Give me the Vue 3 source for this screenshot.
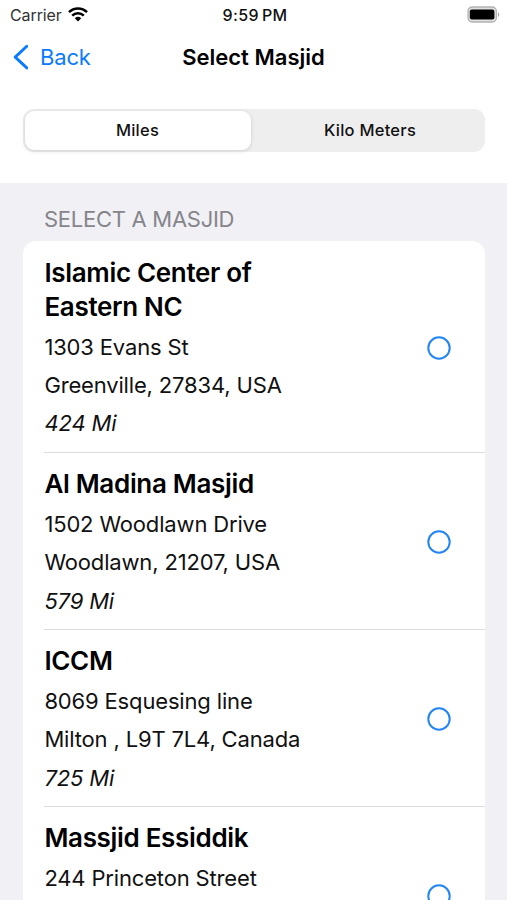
<script setup>
const masjids = [
  { name: ['Islamic Center of', 'Eastern NC'], street: '1303 Evans St', city: 'Greenville, 27834, USA', distance: '424 Mi' },
  { name: ['Al Madina Masjid'], street: '1502 Woodlawn Drive', city: 'Woodlawn, 21207, USA', distance: '579 Mi' },
  { name: ['ICCM'], street: '8069 Esquesing line', city: 'Milton , L9T 7L4, Canada', distance: '725 Mi' },
  { name: ['Massjid Essiddik'], street: '244 Princeton Street' }
]
</script>

<template>
  <div class="screen">
    <header class="top">
      <div class="status">
        <div class="carrier"><span>Carrier</span>
          <svg width="20" height="15" viewBox="0 0 20 15"><g fill="none" stroke="#000" stroke-width="2.5"><path d="M1 5.2a12.8 12.8 0 0 1 18 0"/><path d="M4.2 8.6a8.3 8.3 0 0 1 11.6 0"/></g><path d="M6.8 11.3a4.7 4.7 0 0 1 6.4 0L10 14.5z"/></svg>
        </div>
        <div class="time">9:59<span>PM</span></div>
        <svg class="battery" width="33" height="17" viewBox="0 0 33 17"><rect x="1" y="1" width="28.4" height="15" rx="4.2" fill="#e0e0e0" stroke="#b2b2b2" stroke-width="1.3"/><rect x="2.8" y="3.4" width="24.6" height="10.2" rx="2"/><path d="M31 6.2c1.7.6 1.7 4 0 4.6z" fill="#aaa"/></svg>
      </div>
      <nav class="nav">
        <div class="back"><svg width="16" height="26" viewBox="0 0 16 26"><path d="M14.8 2.3 3.2 13.1l11.6 10.8" fill="none" stroke="#0a7aff" stroke-width="2.9" stroke-linecap="round" stroke-linejoin="round"/></svg><span>Back</span></div>
        <h1>Select Masjid</h1>
        <div></div>
      </nav>
      <div class="segments"><div class="segment selected">Miles</div><div class="segment">Kilo Meters</div></div>
    </header>
    <main>
      <h2>SELECT A MASJID</h2>
      <div class="list">
        <article v-for="m in masjids" :key="m.street" class="row">
          <div class="info">
            <h3><span v-for="line in m.name" :key="line">{{ line }}</span></h3>
            <p>{{ m.street }}</p>
            <p v-if="m.city">{{ m.city }}</p>
            <p v-if="m.distance" class="distance">{{ m.distance }}</p>
          </div>
          <svg class="radio" width="24" height="24" viewBox="0 0 24 24"><circle cx="12" cy="12" r="10.7" fill="none" stroke="#2485f4" stroke-width="2"/></svg>
        </article>
      </div>
    </main>
  </div>
</template>

<style>
body { margin: 0; overflow: hidden; }
</style>
<style scoped>
* { box-sizing: border-box; }
.screen { width: 507px; height: 900px; overflow: hidden; background: #f1f0f5; color: #000; font-family: Inter, sans-serif; }
.top { height: 183px; background: #fff; }
.status { height: 29px; display: grid; grid-template-columns: 1fr auto 1fr; align-items: center; padding: 0 7px 0 10px; font-size: 16px; }
.carrier { display: flex; gap: 6px; align-items: center; color: #333; letter-spacing: -.1px; }
.time { display: flex; gap: 3px; font-weight: 550; letter-spacing: .4px; color: #111; }
.battery { justify-self: end; margin-bottom: 1px; }
.nav { height: 56px; display: grid; grid-template-columns: 1fr auto 1fr; align-items: center; padding: 0 12px; }
.back { display: flex; align-items: center; gap: 12px; color: #0a7aff; font-size: 22px; line-height: 26px; letter-spacing: -.15px; }
h1 { margin: 0; font-size: 22px; line-height: 26px; font-weight: 600; letter-spacing: .02px; }
.segments { height: 43px; margin: 24px 22px 0 23px; padding: 2px; border-radius: 11px; background: #eeeeef; display: grid; grid-template-columns: 226px 1fr; }
.segment { display: flex; align-items: center; justify-content: center; padding-bottom: 1px; font-size: 16.5px; font-weight: 500; letter-spacing: .25px; color: #111; }
.segment:last-child { padding-left: 6px; }
.selected { background: #fff; border-radius: 9px; box-shadow: 0 1px 4px #0002; padding-right: 1px; }
main { padding: 22px 22px 0 23px; }
h2 { margin: 0 0 8px 21px; font-size: 22px; line-height: 28px; font-weight: 400; color: #85858a; letter-spacing: -.28px; }
.list { background: #fff; border-radius: 13px 13px 0 0; overflow: hidden; }
.row { min-height: 177.2px; margin-left: 21px; padding: 14px 34px 8.8px 0; display: flex; align-items: center; justify-content: space-between; border-bottom: 1px solid #dcdce0; }
.row:first-child { padding-top: 15px; }
.info { align-self: flex-start; padding-left: .4px; }
h3 { margin: 0 0 4.5px; font-size: 26px; line-height: 33.5px; font-weight: 600; letter-spacing: -.32px; }
h3 span { display: block; }
p { margin: 0; font-size: 22px; line-height: 38.45px; letter-spacing: -.16px; white-space: pre; color: #111; }
.distance { font-style: italic; }
.radio { flex: none; position: relative; top: -1.5px; left: .4px; }
</style>
